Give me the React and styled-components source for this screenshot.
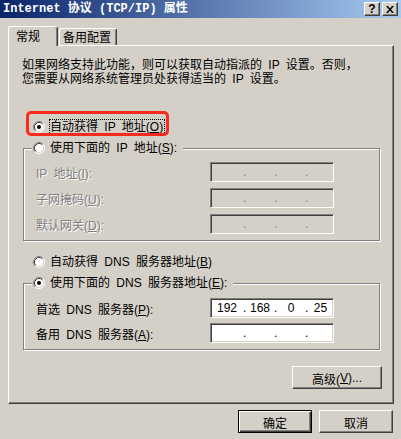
import React from 'react';
import styled, { createGlobalStyle, css } from 'styled-components';

const GlobalStyle = createGlobalStyle`
  html, body {
    margin: 0;
    padding: 0;
    background: #d4d0c8;
  }
  body {
    font-family: "Liberation Sans", "Noto Sans CJK SC", sans-serif;
    font-size: 12px;
    word-spacing: 3px;
    color: #000;
  }
`;

const raised = css`
  box-sizing: border-box;
  background: #d4d0c8;
  border: 1px solid;
  border-color: #fff #404040 #404040 #fff;
  box-shadow: inset -1px -1px #808080;
`;

const Window = styled.div`
  width: 401px;
  height: 439px;
  background: #d4d0c8;
  display: flex;
  flex-direction: column;
  overflow: hidden;
`;

const TitleBar = styled.div`
  height: 18px;
  flex: none;
  display: flex;
  align-items: center;
  justify-content: space-between;
  padding: 0 3px;
  background: linear-gradient(to right, #0a246a, #a6caf0);
`;

const TitleText = styled.span`
  color: #fff;
  font-family: "Liberation Mono", "Noto Sans CJK SC", monospace;
  font-weight: bold;
  font-size: 12px;
  line-height: 18px;
  word-spacing: 0;
  white-space: nowrap;
`;

const TitleButtons = styled.div`
  display: flex;
  gap: 2px;
`;

const TitleButton = styled.div`
  ${raised};
  width: 16px;
  height: 14px;
  display: flex;
  align-items: center;
  justify-content: center;
  font-family: "Liberation Sans", sans-serif;
  font-weight: bold;
  font-size: 12px;
  line-height: 12px;
`;

const Body = styled.div`
  padding: 8px 8px 0 8px;
  display: flex;
  flex-direction: column;
`;

const TabStrip = styled.div`
  display: flex;
  align-items: flex-end;
  height: 19px;
  position: relative;
  z-index: 1;
`;

const Tab = styled.div`
  box-sizing: border-box;
  width: ${p => p.$w}px;
  height: ${p => (p.$active ? 20 : 17)}px;
  margin-bottom: ${p => (p.$active ? -1 : 0)}px;
  margin-left: ${p => (p.$active ? 0 : 1)}px;
  padding: ${p => (p.$active ? '3px 0 0 7px' : '2px 0 0 3px')};
  background: #d4d0c8;
  border: 1px solid;
  border-bottom: none;
  border-color: #fff #404040 transparent #fff;
  border-radius: 3px 3px 0 0;
  box-shadow: inset -1px 0 #808080;
  line-height: 14px;
  white-space: nowrap;
`;

const Panel = styled.div`
  box-sizing: border-box;
  width: 386px;
  height: 359px;
  padding: 0 13px 0 14px;
  border: 1px solid;
  border-color: #fff #404040 #404040 #fff;
  box-shadow: inset -1px -1px #808080;
  display: flex;
  flex-direction: column;
`;

const Desc = styled.div`
  margin: 12px 0 0 -1px;
  line-height: 14px;
  white-space: nowrap;
`;

const RadioRow = styled.div`
  position: relative;
  display: flex;
  align-items: center;
  gap: 4px;
  height: 16px;
  margin-top: ${p => p.$mt || 0}px;
  padding-left: 10px;
`;

const Highlight = styled.div`
  position: absolute;
  left: 3px;
  top: -8px;
  width: 143px;
  height: 25px;
  box-sizing: border-box;
  border: 3px solid #fa2a1c;
  border-radius: 5px;
  pointer-events: none;
`;

const RadioSvg = styled.svg`
  flex: none;
  display: block;
`;

const RadioText = styled.span`
  border: 1px ${p => (p.$focus ? 'dotted #000' : 'solid transparent')};
  padding: 1px 1px 0 0;
  line-height: 13px;
  white-space: nowrap;
`;

const Key = styled.span`
  text-decoration: underline;
`;

const Group = styled.div`
  position: relative;
  margin-top: 13px;
  border: 1px solid #808080;
  box-shadow: inset 1px 1px #fff, 1px 1px #fff;
  padding: ${p => p.$pad};
`;

const Legend = styled.div`
  position: absolute;
  left: 8px;
  top: -9px;
  height: 16px;
  display: flex;
  align-items: center;
  gap: 4px;
  padding: 0 4px 0 1px;
  background: #d4d0c8;
`;

const Fields = styled.div`
  display: grid;
  grid-template-columns: 174px 124px;
  row-gap: ${p => p.$gap}px;
  align-items: center;
`;

const FieldLabel = styled.span`
  padding-top: 1px;
  white-space: nowrap;
  color: ${p => (p.$disabled ? '#808080' : '#000')};
  text-shadow: ${p => (p.$disabled ? '1px 1px #fff' : 'none')};
`;

const IpBox = styled.div`
  box-sizing: border-box;
  width: 124px;
  height: 20px;
  border: 1px solid;
  border-color: #808080 #fff #fff #808080;
  box-shadow: inset 1px 1px #404040, inset -1px -1px #d4d0c8;
  background: ${p => (p.$disabled ? '#d4d0c8' : '#fff')};
  display: grid;
  grid-template-columns: 32px 3px 28px 3px 28px 3px 1fr;
  align-items: center;
  font-size: 12px;
  line-height: 16px;
  word-spacing: 0;
`;

const Octet = styled.span`
  text-align: center;
`;

const IpDot = styled.span`
  text-align: center;
  color: ${p => (p.$disabled ? '#808080' : '#000')};
`;

const AdvancedRow = styled.div`
  display: flex;
  justify-content: flex-end;
  margin: 16px -2px 0 0;
`;

const Button = styled.div`
  ${raised};
  width: ${p => p.$w}px;
  height: 23px;
  padding-top: 1px;
  display: flex;
  align-items: center;
  justify-content: center;
  white-space: nowrap;
  ${p => p.$default && css`
    border: 1px solid #000;
    box-shadow: inset 1px 1px #fff, inset -1px -1px #404040, inset -2px -2px #808080;
  `}
`;

const Footer = styled.div`
  display: flex;
  justify-content: flex-end;
  gap: 7px;
  margin-top: 6px;
`;

function Radio({ checked }) {
  return (
    <RadioSvg width="12" height="12" viewBox="0 0 12 12">
      <circle cx="6" cy="6" r="5" fill="#fff" />
      <path d="M2.11 9.89 A5.5 5.5 0 0 1 9.89 2.11" fill="none" stroke="#808080" />
      <path d="M9.89 2.11 A5.5 5.5 0 0 1 2.11 9.89" fill="none" stroke="#fff" />
      <path d="M2.82 9.18 A4.5 4.5 0 0 1 9.18 2.82" fill="none" stroke="#404040" />
      <path d="M9.18 2.82 A4.5 4.5 0 0 1 2.82 9.18" fill="none" stroke="#d4d0c8" />
      {checked && <circle cx="6" cy="6" r="2" fill="#000" />}
    </RadioSvg>
  );
}

function IpField({ value = ['', '', '', ''], disabled }) {
  return (
    <IpBox $disabled={disabled}>
      {value.map((v, i) => (
        <React.Fragment key={i}>
          {i > 0 && <IpDot $disabled={disabled}>.</IpDot>}
          <Octet>{v}</Octet>
        </React.Fragment>
      ))}
    </IpBox>
  );
}

function CloseGlyph() {
  return (
    <svg width="8" height="7" viewBox="0 0 8 7">
      <path d="M0 0h2l2 2.5L6 0h2L5 3.5 8 7H6L4 4.5 2 7H0l3-3.5z" fill="#000" />
    </svg>
  );
}

export default function App() {
  return (
    <>
      <GlobalStyle />
      <Window>
        <TitleBar>
          <TitleText>Internet 协议 (TCP/IP) 属性</TitleText>
          <TitleButtons>
            <TitleButton>?</TitleButton>
            <TitleButton><CloseGlyph /></TitleButton>
          </TitleButtons>
        </TitleBar>

        <Body>
          <TabStrip>
            <Tab $active $w={50}>常规</Tab>
            <Tab $w={58}>备用配置</Tab>
          </TabStrip>

          <Panel>
            <Desc>
              如果网络支持此功能，则可以获取自动指派的 IP 设置。否则，<br />
              您需要从网络系统管理员处获得适当的 IP 设置。
            </Desc>

            <RadioRow $mt={33}>
              <Radio checked />
              <RadioText $focus>自动获得 IP 地址(<Key>O</Key>)</RadioText>
              <Highlight />
            </RadioRow>

            <Group $pad="13px 0 6px 12px">
              <Legend>
                <Radio />
                <RadioText>使用下面的 IP 地址(<Key>S</Key>):</RadioText>
              </Legend>
              <Fields $gap={6}>
                <FieldLabel $disabled>IP 地址(<Key>I</Key>):</FieldLabel>
                <IpField disabled />
                <FieldLabel $disabled>子网掩码(<Key>U</Key>):</FieldLabel>
                <IpField disabled />
                <FieldLabel $disabled>默认网关(<Key>D</Key>):</FieldLabel>
                <IpField disabled />
              </Fields>
            </Group>

            <RadioRow $mt={13}>
              <Radio />
              <RadioText>自动获得 DNS 服务器地址(<Key>B</Key>)</RadioText>
            </RadioRow>

            <Group $pad="14px 0 6px 12px">
              <Legend>
                <Radio checked />
                <RadioText>使用下面的 DNS 服务器地址(<Key>E</Key>):</RadioText>
              </Legend>
              <Fields $gap={5}>
                <FieldLabel>首选 DNS 服务器(<Key>P</Key>):</FieldLabel>
                <IpField value={['192', '168', '0', '25']} />
                <FieldLabel>备用 DNS 服务器(<Key>A</Key>):</FieldLabel>
                <IpField />
              </Fields>
            </Group>

            <AdvancedRow>
              <Button $w={90}>高级(<Key>V</Key>)...</Button>
            </AdvancedRow>
          </Panel>

          <Footer>
            <Button $default $w={74}>确定</Button>
            <Button $w={74}>取消</Button>
          </Footer>
        </Body>
      </Window>
    </>
  );
}
